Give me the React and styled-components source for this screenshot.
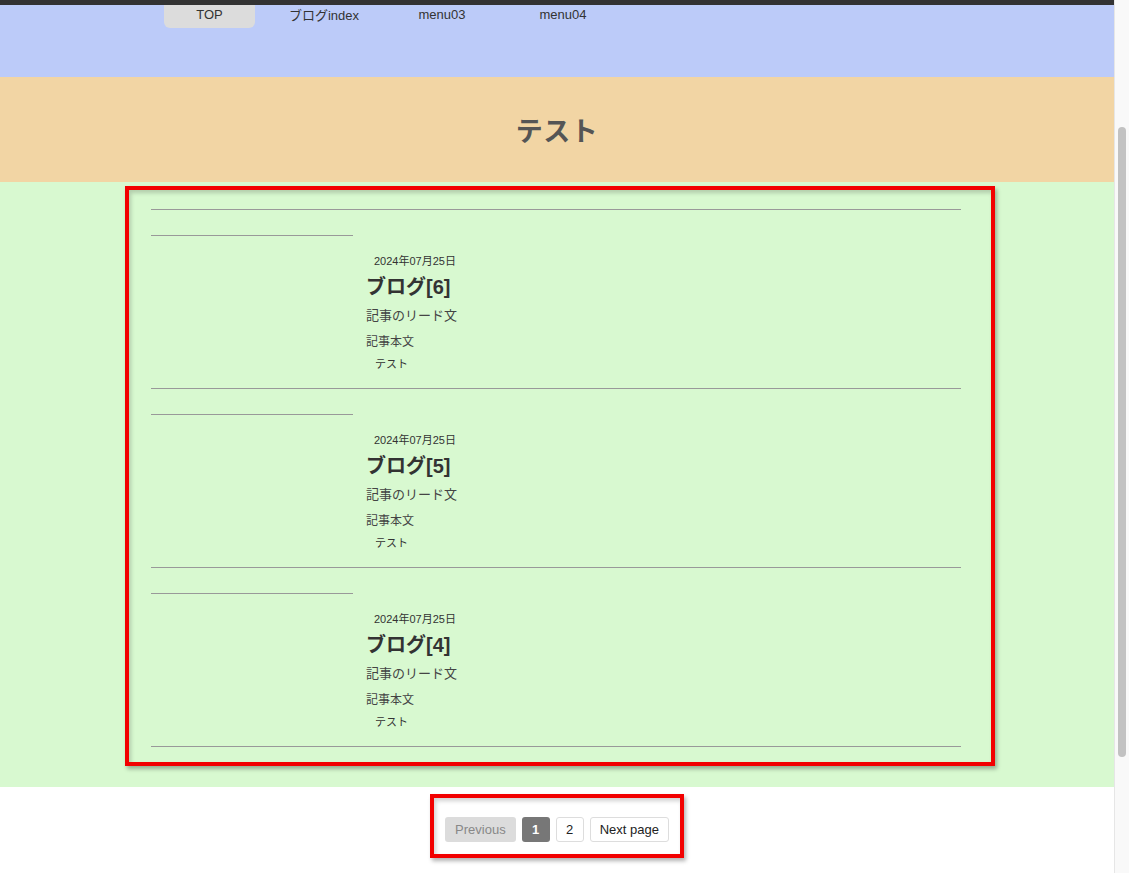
import React from "react";
import styled, { createGlobalStyle } from "styled-components";

const Global = createGlobalStyle`
  html, body { margin: 0; padding: 0; height: 873px; overflow: hidden; }
  body { font-family: "Liberation Sans", "Noto Sans CJK JP", sans-serif; color: #333; }
  * { box-sizing: border-box; }
`;

const Shell = styled.div`
  display: flex;
  width: 1129px;
  height: 873px;
`;

const Main = styled.div`
  flex: 1;
  display: flex;
  flex-direction: column;
  background: #fff;
  min-width: 0;
`;

const TopStrip = styled.div`
  height: 5px;
  background: #333;
  flex: none;
`;

const NavBand = styled.nav`
  height: 72px;
  background: #bccbf9;
  display: flex;
  align-items: flex-start;
  padding-left: 164px;
  flex: none;
`;

const NavItem = styled.a`
  width: ${(p) => p.$w}px;
  height: 23px;
  display: flex;
  align-items: center;
  justify-content: center;
  font-size: 13px;
  color: #333;
  text-decoration: none;
  background: ${(p) => (p.$active ? "#dcdcdc" : "transparent")};
  border-radius: 0 0 6px 6px;
  padding-bottom: 4px;
`;

const TitleBand = styled.header`
  height: 105px;
  background: #f2d5a4;
  display: flex;
  align-items: center;
  justify-content: center;
  flex: none;
`;

const PageTitle = styled.h1`
  margin: 0;
  font-size: 27px;
  font-weight: 700;
  color: #555;
  letter-spacing: 0.5px;
`;

const ListBand = styled.section`
  background: #d8f9d0;
  padding: 4px 0 21px 125px;
  flex: none;
`;

const RedFrame = styled.div`
  border: 4px solid #f20000;
  box-shadow: 2px 3px 4px rgba(0, 0, 0, 0.3), inset 2px 3px 4px rgba(0, 0, 0, 0.18);
  width: ${(p) => (p.$w ? `${p.$w}px` : "auto")};
  padding: ${(p) => p.$p};
`;

const ArticleList = styled.div`
  width: 810px;
  border-top: 1px solid #999;
`;

const Article = styled.article`
  display: flex;
  gap: 13px;
  border-bottom: 1px solid #999;
  padding-bottom: 16px;
`;

const Thumb = styled.div`
  width: 202px;
  height: 26px;
  border-bottom: 1px solid #999;
  flex: none;
`;

const Body = styled.div`
  padding-top: 43px;
  display: flex;
  flex-direction: column;
`;

const DateText = styled.time`
  font-size: 11px;
  line-height: 16px;
  padding-left: 8px;
  color: #333;
`;

const ArticleTitle = styled.h2`
  margin: 6px 0 0;
  font-size: 20px;
  line-height: 24px;
  font-weight: 700;
  color: #333;
`;

const Lead = styled.p`
  margin: 7px 0 0;
  font-size: 13px;
  line-height: 20px;
  color: #444;
`;

const Text = styled.p`
  margin: 7px 0 0;
  font-size: 12px;
  line-height: 18px;
  color: #444;
`;

const Tag = styled.span`
  margin-top: 5px;
  font-size: 11px;
  line-height: 16px;
  padding-left: 9px;
  color: #333;
`;

const PagerWrap = styled.div`
  display: flex;
  justify-content: center;
  padding-top: 7px;
`;

const Pager = styled.div`
  display: flex;
  gap: 6px;
`;

const PageBtn = styled.span`
  height: 25px;
  min-width: 28px;
  padding: 0 ${(p) => (p.$wide ? 9 : 0)}px;
  display: flex;
  align-items: center;
  justify-content: center;
  white-space: nowrap;
  font-size: 13px;
  border-radius: 3px;
  border: 1px solid ${(p) => (p.$kind === "white" ? "#ddd" : "transparent")};
  background: ${(p) =>
    p.$kind === "disabled" ? "#dcdcdc" : p.$kind === "current" ? "#777" : "#fff"};
  color: ${(p) =>
    p.$kind === "disabled" ? "#888" : p.$kind === "current" ? "#fff" : "#222"};
  font-weight: ${(p) => (p.$kind === "current" ? 700 : 400)};
`;

const ScrollTrack = styled.div`
  width: 15px;
  flex: none;
  background: #f9f9f9;
  border-left: 1px solid #e6e6e6;
  padding: 127px 0 0 3px;
`;

const ScrollThumb = styled.div`
  width: 8px;
  height: 630px;
  border-radius: 4px;
  background: #c2c2c2;
`;

const navItems = [
  { label: "TOP", w: 91, active: true },
  { label: "ブログindex", w: 138 },
  { label: "menu03", w: 98 },
  { label: "menu04", w: 144 },
];

const posts = [6, 5, 4];

export default function App() {
  return (
    <>
      <Global />
      <Shell>
        <Main>
          <TopStrip />
          <NavBand>
            {navItems.map((n) => (
              <NavItem key={n.label} $w={n.w} $active={n.active}>
                {n.label}
              </NavItem>
            ))}
          </NavBand>
          <TitleBand>
            <PageTitle>テスト</PageTitle>
          </TitleBand>
          <ListBand>
            <RedFrame $w={870} $p="19px 30px 15px 22px">
              <ArticleList>
                {posts.map((n) => (
                  <Article key={n}>
                    <Thumb />
                    <Body>
                      <DateText>2024年07月25日</DateText>
                      <ArticleTitle>ブログ[{n}]</ArticleTitle>
                      <Lead>記事のリード文</Lead>
                      <Text>記事本文</Text>
                      <Tag>テスト</Tag>
                    </Body>
                  </Article>
                ))}
              </ArticleList>
            </RedFrame>
          </ListBand>
          <PagerWrap>
            <RedFrame $p="19px 11px 12px 11px">
              <Pager>
                <PageBtn $kind="disabled" $wide>Previous</PageBtn>
                <PageBtn $kind="current">1</PageBtn>
                <PageBtn $kind="white">2</PageBtn>
                <PageBtn $kind="white" $wide>Next page</PageBtn>
              </Pager>
            </RedFrame>
          </PagerWrap>
        </Main>
        <ScrollTrack>
          <ScrollThumb />
        </ScrollTrack>
      </Shell>
    </>
  );
}
